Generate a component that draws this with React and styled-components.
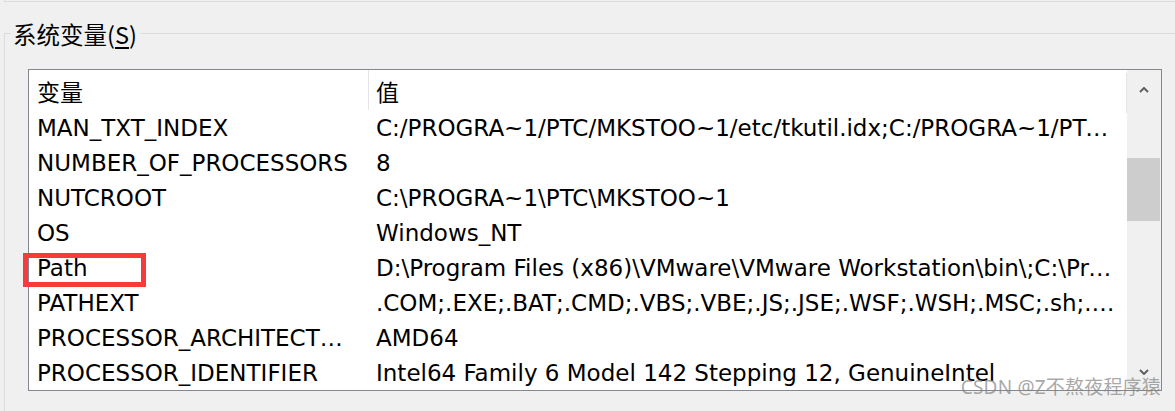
import styled, { createGlobalStyle } from "styled-components";

const GlobalStyle = createGlobalStyle`
  html, body {
    margin: 0;
    padding: 0;
    background: #f0f0f0;
    overflow: hidden;
  }
  body {
    font-family: "DejaVu Sans", "Noto Sans CJK SC", sans-serif;
    color: #000;
  }
`;

const Page = styled.div`
  position: relative;
  width: 1175px;
  height: 411px;
  overflow: hidden;
`;

// bottom-left corner of the group box above
const PrevBox = styled.div`
  height: 1px;
  margin-left: 4px;
  border-left: 1px solid #dcdcdc;
  border-bottom: 1px solid #dcdcdc;
`;

const GroupBox = styled.fieldset`
  margin: 16px 0 0 4px;
  padding: 0;
  height: 420px;
  border: 1px solid #dcdcdc;
  border-right: none;
  border-bottom: none;
`;

const Legend = styled.legend`
  margin-left: 5px;
  padding: 2px 3px 0;
  font-family: "Noto Sans CJK SC", sans-serif;
  font-size: 23.5px;
  line-height: 28px;

  u {
    text-underline-offset: 3px;
  }
`;

const ListView = styled.div`
  margin: 21px 0 0 23px;
  width: 1132px;
  height: 320px;
  border: 1px solid #828790;
  background: #fff;
  display: grid;
  grid-template-columns: 1098px 34px;
`;

const List = styled.div`
  display: flex;
  flex-direction: column;
  overflow: hidden;
`;

const Row = styled.div`
  display: grid;
  grid-template-columns: 339px 1px 758px;
  height: ${(p) => (p.$header ? 40 : 35)}px;
  align-items: center;
  flex-shrink: 0;
`;

const Cell = styled.div`
  position: relative;
  padding: 1px 9px 0 ${(p) => (p.$first ? 8 : 7)}px;
  font-family: ${(p) =>
    p.$cjk ? '"Noto Sans CJK SC", sans-serif' : '"DejaVu Sans", "Noto Sans CJK SC", sans-serif'};
  font-size: 23px;
  white-space: nowrap;
  overflow: hidden;
  text-overflow: ellipsis;
`;

const Sep = styled.div`
  align-self: stretch;
  background: ${(p) => (p.$show ? "#e5e5e5" : "transparent")};
`;

const HeaderEnd = styled.div`
  position: relative;
  &::after {
    content: "";
    position: absolute;
    right: 0;
    top: 0;
    height: 40px;
    width: 1px;
    background: #e5e5e5;
  }
`;

const Highlight = styled.div`
  position: absolute;
  left: 23px;
  top: 253px;
  width: 113px;
  height: 24px;
  border: 5px solid #f53b3b;
  pointer-events: none;
`;

const ScrollBar = styled.div`
  background: #f0f0f0;
  display: flex;
  flex-direction: column;
  align-items: center;
`;

const ArrowBtn = styled.div`
  height: ${(p) => p.$h}px;
  width: 100%;
  display: flex;
  align-items: center;
  justify-content: center;
`;

const Track = styled.div`
  flex: 1;
  width: 100%;
  display: flex;
  flex-direction: column;
`;

const Thumb = styled.div`
  margin: ${(p) => p.$top}px 1px 0 0;
  height: 63px;
  background: #cdcdcd;
`;

const Watermark = styled.div`
  position: absolute;
  right: 14px;
  bottom: 11px;
  font-family: "Noto Sans", "Noto Sans CJK SC", sans-serif;
  font-size: 19px;
  color: rgba(130, 130, 130, 0.7);
  letter-spacing: 0.2px;
  pointer-events: none;
`;

const Chevron = ({ up }) => (
  <svg width="10" height="6" viewBox="0 0 10 6">
    <path
      d={up ? "M1 5 L5 1 L9 5" : "M1 1 L5 5 L9 1"}
      fill="none"
      stroke="#606060"
      strokeWidth="2"
    />
  </svg>
);

const rows = [
  ["MAN_TXT_INDEX", "C:/PROGRA~1/PTC/MKSTOO~1/etc/tkutil.idx;C:/PROGRA~1/PTC/MKSTOO~1/etc/tkutil2.idx"],
  ["NUMBER_OF_PROCESSORS", "8"],
  ["NUTCROOT", "C:\\PROGRA~1\\PTC\\MKSTOO~1"],
  ["OS", "Windows_NT"],
  ["Path", "D:\\Program Files (x86)\\VMware\\VMware Workstation\\bin\\;C:\\Program Files\\Common Files"],
  ["PATHEXT", ".COM;.EXE;.BAT;.CMD;.VBS;.VBE;.JS;.JSE;.WSF;.WSH;.MSC;.sh;.ksh;.csh"],
  ["PROCESSOR_ARCHITECTURE", "AMD64"],
  ["PROCESSOR_IDENTIFIER", "Intel64 Family 6 Model 142 Stepping 12, GenuineIntel"],
];

export default function App() {
  return (
    <Page>
      <GlobalStyle />
      <PrevBox />
      <GroupBox>
        <Legend>
          系统变量(<u>S</u>)
        </Legend>
        <ListView>
          <List>
            <Row $header>
              <Cell $first $cjk>变量</Cell>
              <Sep $show />
              <HeaderEnd>
                <Cell $cjk>值</Cell>
              </HeaderEnd>
            </Row>
            {rows.map(([name, value]) => (
              <Row key={name}>
                <Cell $first>{name}</Cell>
                <Sep />
                <Cell>{value}</Cell>
              </Row>
            ))}
          </List>
          <ScrollBar>
            <ArrowBtn $h={40}>
              <Chevron up />
            </ArrowBtn>
            <Track>
              <Thumb $top={48} />
            </Track>
            <ArrowBtn $h={36}>
              <Chevron />
            </ArrowBtn>
          </ScrollBar>
        </ListView>
      </GroupBox>
      <Highlight />
      <Watermark>CSDN @Z不熬夜程序猿</Watermark>
    </Page>
  );
}
